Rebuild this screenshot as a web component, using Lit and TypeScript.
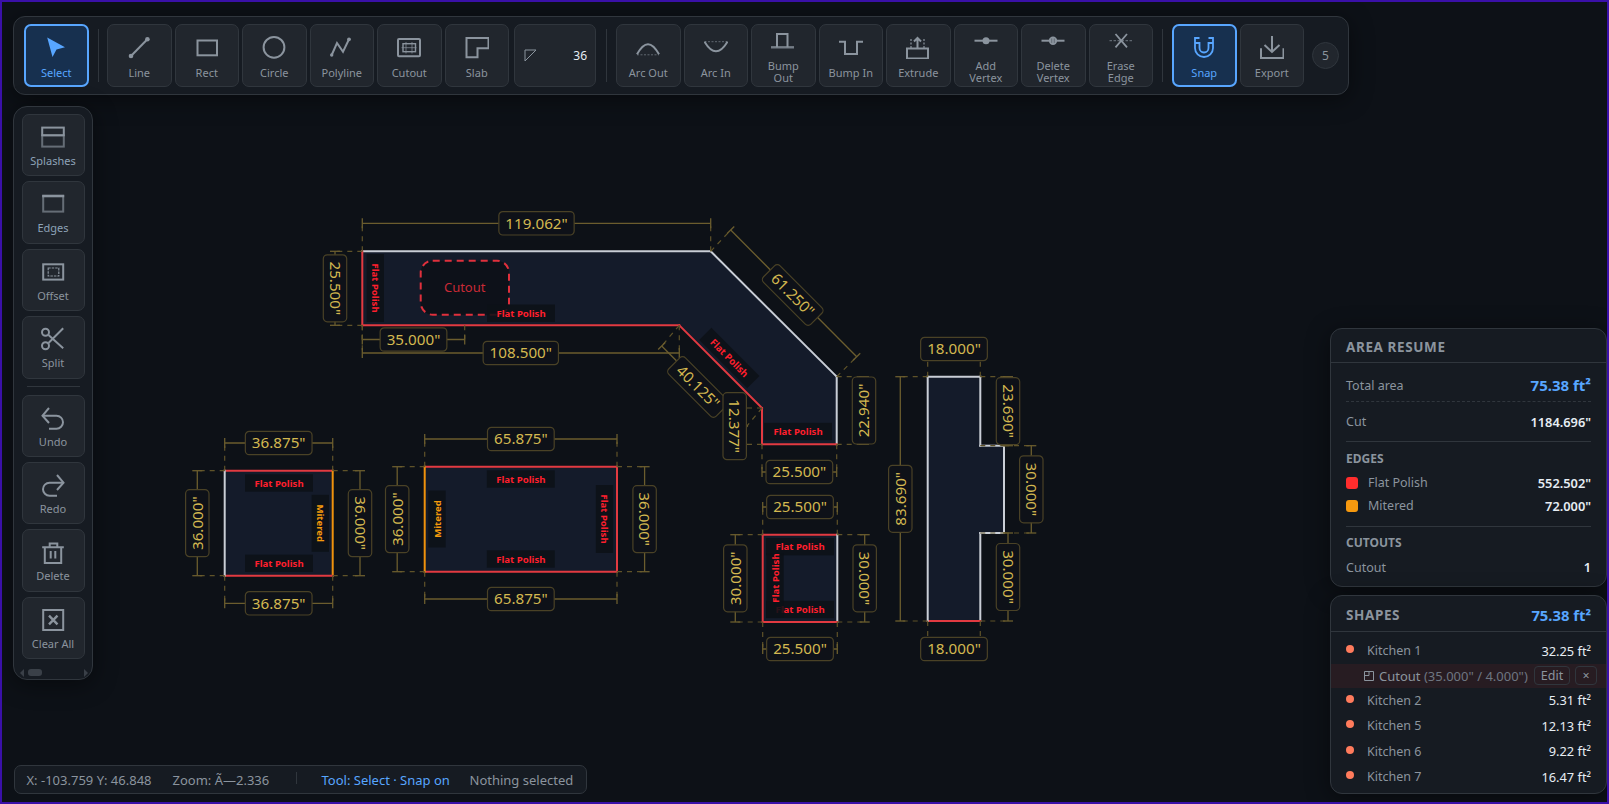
import { LitElement, css, html, svg } from 'lit'
import { customElement } from 'lit/decorators.js'

const icons: Record<string, any> = {
  select: svg`<path d="M3.2 2.5 21 12.3l-8.5 2.2L8.5 22Z" fill="currentColor" stroke="none"/>`,
  line: svg`<path d="M4 21 20.4 4.3"/><circle cx="4" cy="21" r="2.3" fill="currentColor" stroke="none"/><circle cx="20.4" cy="4.3" r="2.3" fill="currentColor" stroke="none"/>`,
  rect: svg`<rect x="2.5" y="5.5" width="19.5" height="14.8"/>`,
  circle: svg`<circle cx="12" cy="12.3" r="10.4"/>`,
  polyline: svg`<path d="M1.7 20 7 8l6 8.7 6-12.4"/><circle cx="1.7" cy="20" r="1.7" fill="currentColor" stroke="none"/><circle cx="19" cy="4.3" r="1.9" fill="currentColor" stroke="none"/>`,
  cutout: svg`<rect x="1" y="4" width="22" height="17.3" rx="1"/><rect x="6" y="8.7" width="12.5" height="8" stroke-width="1.4"/><path d="M9 7v11.500M15 7v11.500M4.500 12.700h15" stroke-width="1" opacity=".7"/>`,
  slab: svg`<path d="M1.500 3H23.500V13.300H12.500V22.300H1.500Z"/>`,
  arcOut: svg`<path d="M1 19.300Q12 -1 23 19.300"/><path d="M1 19.800H23" stroke-width="1" stroke-dasharray="2 1.500" opacity=".6"/>`,
  arcIn: svg`<path d="M.5 6.700Q12 26 23.500 6.700"/><path d="M.5 6.700H23.500" stroke-width="1" stroke-dasharray="2 1.500" opacity=".6"/>`,
  bumpOut: svg`<path d="M6 18.300V5H16.500V18.300"/><path d="M0 18.300H23" stroke-width="2.400" opacity=".8"/>`,
  bumpIn: svg`<path d="M0 6.700H6V19H18V6.700H24"/>`,
  extrude: svg`<rect x="1" y="13.500" width="21" height="10"/><path d="M11.500 13V3M8 6.500 11.500 3 15 6.500"/><path d="M5 13V3M18 13V3" stroke-width="1.200" stroke-dasharray="2 1.500"/>`,
  addVertex: svg`<path d="M.5 11.700H23.500"/><circle cx="12" cy="11.700" r="3.500" fill="currentColor" stroke="none"/>`,
  delVertex: svg`<path d="M.5 11.700H23.500"/><circle cx="12" cy="11.700" r="4.200" fill="currentColor" stroke="none"/><path d="M10.700 9.500v4.400M13.300 9.500v4.400" stroke="#5a626b" stroke-width=".8"/>`,
  eraseEdge: svg`<path d="M.5 11.700H23.500" stroke-width="1.200" stroke-dasharray="2.500 1.500" opacity=".6"/><path d="M6.500 5 18 18.300M18 5 6.500 18.300" stroke-width="1.800"/>`,
  snap: svg`<g stroke-width="1.800"><path d="M7.500 3H3V13a9 9 0 0 0 18 0V3H16.500"/><path d="M3 8H7.500V13a4.500 4.500 0 0 0 9 0V8H21"/></g>`,
  exportIcon: svg`<path d="M1 13.300V23H23.500V13.300"/><path d="M12 1V16.700M4.500 10 12 17 19.500 10"/>`,
  splashes: svg`<rect x="1.200" y="10.300" width="21.600" height="11.300" opacity=".65"/><rect x="1.200" y="2.600" width="21.600" height="7.700"/>`,
  edges: svg`<rect x="2.200" y="4" width="20" height="15.600" opacity=".65"/><path d="M1.200 4H23.200" stroke-width="2.600"/>`,
  offset: svg`<rect x="2.200" y="4.300" width="20" height="15.300"/><rect x="7.200" y="8" width="10.600" height="8" stroke-width="1.200" stroke-dasharray="2.500 1"/>`,
  split: svg`<circle cx="4.500" cy="5.300" r="3.500"/><circle cx="4.500" cy="18.700" r="3.500"/><path d="M7.500 8 22.200 21.300M7.500 16 22.200 1.300"/>`,
  undo: svg`<path d="M8 2 1.500 9.700 8 17"/><path d="M1.500 9.700H15.500a6.500 6.500 0 0 1 0 13H8"/>`,
  redo: svg`<path d="M16 2 22.500 9.700 16 17"/><path d="M22.500 9.700H8.500a6.500 6.500 0 0 0 0 13H16"/>`,
  trash: svg`<path d="M1.200 7.300H22.800M8.700 7V3.500H16.300V7M3.800 7.300V23H20.200V7.300M9.700 11V18.500M14.300 11V18.500"/>`,
  clear: svg`<rect x="2.200" y="2" width="20" height="20"/><path d="M8 7.700 16.500 16.300M16.500 7.700 8 16.300" stroke-width="2.400"/>`,
}

type Tool = { icon: string; label: string[]; on?: boolean; tint?: boolean }

const toolsA: Tool[] = [
  { icon: 'line', label: ['Line'] },
  { icon: 'rect', label: ['Rect'] },
  { icon: 'circle', label: ['Circle'] },
  { icon: 'polyline', label: ['Polyline'] },
  { icon: 'cutout', label: ['Cutout'] },
  { icon: 'slab', label: ['Slab'] },
]
const toolsB: Tool[] = [
  { icon: 'arcOut', label: ['Arc Out'] },
  { icon: 'arcIn', label: ['Arc In'] },
  { icon: 'bumpOut', label: ['Bump', 'Out'] },
  { icon: 'bumpIn', label: ['Bump In'] },
  { icon: 'extrude', label: ['Extrude'] },
  { icon: 'addVertex', label: ['Add', 'Vertex'] },
  { icon: 'delVertex', label: ['Delete', 'Vertex'] },
  { icon: 'eraseEdge', label: ['Erase', 'Edge'] },
]
const sideA: Tool[] = [
  { icon: 'splashes', label: ['Splashes'], tint: true },
  { icon: 'edges', label: ['Edges'], tint: true },
  { icon: 'offset', label: ['Offset'] },
  { icon: 'split', label: ['Split'] },
]
const sideB: Tool[] = [
  { icon: 'undo', label: ['Undo'] },
  { icon: 'redo', label: ['Redo'] },
  { icon: 'trash', label: ['Delete'] },
  { icon: 'clear', label: ['Clear All'] },
]

const RED = '#e23a41'
const WHITE = '#c9ced6'
const ORANGE = '#f0920c'

// shape outlines and their edge colours
const shapes: { pts: number[][]; edges: string[] }[] = [
  {
    pts: [[362.3, 251.3], [710.7, 251.3], [836.7, 376.7], [836.7, 444.3], [762, 444.3], [762, 408], [679.3, 325.3], [362.3, 325.3]],
    edges: [WHITE, WHITE, WHITE, RED, RED, RED, RED, RED],
  },
  {
    pts: [[224.7, 470.7], [332.7, 470.7], [332.7, 575.7], [224.7, 575.7]],
    edges: [RED, ORANGE, RED, WHITE],
  },
  {
    pts: [[424.7, 466.7], [617, 466.7], [617, 571.7], [424.7, 571.7]],
    edges: [RED, RED, RED, ORANGE],
  },
  {
    pts: [[762.7, 534.7], [837.3, 534.7], [837.3, 622], [762.7, 622]],
    edges: [RED, WHITE, RED, RED],
  },
  {
    pts: [[927.7, 376.7], [980.3, 376.7], [980.3, 445.7], [1004, 445.7], [1004, 533], [980.3, 533], [980.3, 621], [927.7, 621]],
    edges: [WHITE, WHITE, WHITE, WHITE, WHITE, WHITE, RED, WHITE],
  },
]

// a, b = measured points; qa, qb = ends of the dimension line; c = label centre
type Dim = { a: number[]; b: number[]; qa: number[]; qb: number[]; c: number[]; rot: number; w: number; t: string }

const h = (x1: number, x2: number, y: number, qy: number, t: string, w = 66.7): Dim => ({
  a: [x1, y], b: [x2, y], qa: [x1, qy], qb: [x2, qy], c: [(x1 + x2) / 2, qy], rot: 0, w, t,
})
const v = (x: number, y1: number, y2: number, qx: number, rot: number, t: string, w = 67): Dim => ({
  a: [x, y1], b: [x, y2], qa: [qx, y1], qb: [qx, y2], c: [qx, (y1 + y2) / 2], rot, w, t,
})

const dims: Dim[] = [
  h(362.3, 710.7, 251.3, 223.3, '119.062"', 75.3),
  v(362.3, 251.3, 325.3, 335, 90, '25.500"'),
  h(362.3, 464.7, 325.3, 339.5, '35.000"'),
  h(362.3, 679.3, 325.3, 353, '108.500"', 75.3),
  { a: [710.7, 251.3], b: [836.7, 376.7], qa: [730.7, 230], qb: [856.7, 356.7], c: [792.7, 295], rot: 45, w: 67, t: '61.250"' },
  { a: [679.3, 325.3], b: [762, 408], qa: [661.7, 346], qb: [744.4, 429], c: [698, 387], rot: 45, w: 67, t: '40.125"' },
  v(762, 408, 444.3, 734.7, 90, '12.377"'),
  v(836.7, 376.7, 444.3, 864, -90, '22.940"'),
  h(762, 836.7, 444.3, 472, '25.500"'),
  h(762.7, 837.3, 534.7, 507, '25.500"'),
  h(762.7, 837.3, 622, 649, '25.500"'),
  v(762.7, 534.7, 622, 735.3, -90, '30.000"'),
  v(837.3, 534.7, 622, 864.7, 90, '30.000"'),
  h(927.7, 980.3, 376.7, 349, '18.000"'),
  h(927.7, 980.3, 621, 649, '18.000"'),
  v(927.7, 376.7, 621, 900.3, -90, '83.690"'),
  v(980.3, 376.7, 445.7, 1008, 90, '23.690"'),
  v(1004, 445.7, 533, 1031.3, 90, '30.000"'),
  v(980.3, 533, 621, 1008, 90, '30.000"'),
  h(224.7, 332.7, 470.7, 443, '36.875"'),
  h(224.7, 332.7, 575.7, 603.3, '36.875"'),
  v(224.7, 470.7, 575.7, 197.3, -90, '36.000"'),
  v(332.7, 470.7, 575.7, 360, 90, '36.000"'),
  h(424.7, 617, 466.7, 439, '65.875"'),
  h(424.7, 617, 571.7, 599, '65.875"'),
  v(424.7, 466.7, 571.7, 397.2, -90, '36.000"'),
  v(617, 466.7, 571.7, 644.6, 90, '36.000"'),
]

const FP = 'Flat Polish'
// dx shifts the dark plate along the text direction (only the small Kitchen 6 one is off centre)
const labels: { x: number; y: number; rot: number; t: string; w: number; c: string; dx?: number }[] = [
  { x: 375.3, y: 288, rot: 90, t: FP, w: 68, c: '#ff1f2d' },
  { x: 521, y: 313.2, rot: 0, t: FP, w: 68, c: '#ff1f2d' },
  { x: 729.3, y: 358, rot: 45, t: FP, w: 68, c: '#ff1f2d' },
  { x: 798, y: 431.5, rot: 0, t: FP, w: 68, c: '#ff1f2d' },
  { x: 279, y: 483, rot: 0, t: FP, w: 68, c: '#ff1f2d' },
  { x: 279, y: 563.3, rot: 0, t: FP, w: 68, c: '#ff1f2d' },
  { x: 320.3, y: 523.3, rot: 90, t: 'Mitered', w: 57, c: '#f59a0c' },
  { x: 520.8, y: 479, rot: 0, t: FP, w: 68, c: '#ff1f2d' },
  { x: 520.8, y: 559, rot: 0, t: FP, w: 68, c: '#ff1f2d' },
  { x: 437, y: 519, rot: -90, t: 'Mitered', w: 57, c: '#f59a0c' },
  { x: 604.5, y: 519, rot: 90, t: FP, w: 68, c: '#ff1f2d' },
  { x: 800, y: 546.7, rot: 0, t: FP, w: 68, c: '#ff1f2d' },
  { x: 800, y: 609.5, rot: 0, t: FP, w: 68, c: '#ff1f2d' },
  { x: 775, y: 578, rot: -90, t: FP, w: 65, c: '#ff1f2d', dx: -7.5 },
]

const shapeRows = [
  { name: 'Kitchen 1', area: '32.25' },
  { name: 'Kitchen 2', area: '5.31' },
  { name: 'Kitchen 5', area: '12.13' },
  { name: 'Kitchen 6', area: '9.22' },
  { name: 'Kitchen 7', area: '16.47' },
]

@customElement('app-root')
export class AppRoot extends LitElement {
  renderBtn(t: Tool) {
    return html`
      <button class="tool ${t.on ? 'on' : ''} ${t.tint ? 'tint' : ''} ${t.label.length > 1 ? 'two' : ''}">
        <svg class="ico" viewBox="0 0 24 24">${icons[t.icon]}</svg>
        <span class="lbl">${t.label.map((l) => html`<span>${l}</span>`)}</span>
      </button>
    `
  }

  renderDim(d: Dim) {
    const dx = d.qb[0] - d.qa[0]
    const dy = d.qb[1] - d.qa[1]
    const len = Math.hypot(dx, dy)
    const tx = (-dy / len) * 5
    const ty = (dx / len) * 5
    return svg`
      <line class="ext" x1=${d.a[0]} y1=${d.a[1]} x2=${d.qa[0]} y2=${d.qa[1]} />
      <line class="ext" x1=${d.b[0]} y1=${d.b[1]} x2=${d.qb[0]} y2=${d.qb[1]} />
      <line class="dim" x1=${d.qa[0]} y1=${d.qa[1]} x2=${d.qb[0]} y2=${d.qb[1]} />
      <line class="dim" x1=${d.qa[0] - tx} y1=${d.qa[1] - ty} x2=${d.qa[0] + tx} y2=${d.qa[1] + ty} />
      <line class="dim" x1=${d.qb[0] - tx} y1=${d.qb[1] - ty} x2=${d.qb[0] + tx} y2=${d.qb[1] + ty} />
      <g transform="translate(${d.c[0]} ${d.c[1]}) rotate(${d.rot})">
        <rect class="dimbox" x=${-d.w / 2} y="-11.7" width=${d.w} height="23.400" rx="4" />
        <text class="dimtxt" y="5.300" text-anchor="middle">${d.t}</text>
      </g>
    `
  }

  renderCanvas() {
    return html`
      <svg class="canvas" viewBox="0 0 1609 804">
        ${shapes.map((s) => svg`<polygon class="fill" points=${s.pts.map((p) => p.join(',')).join(' ')} />`)}
        <rect class="hole" x="420.700" y="260.700" width="88.300" height="54" rx="12" />
        <text class="holetxt" x="464.700" y="292" text-anchor="middle">Cutout</text>
        ${shapes.map((s) =>
          s.pts.map((p, i) => {
            const n = s.pts[(i + 1) % s.pts.length]
            return svg`<line x1=${p[0]} y1=${p[1]} x2=${n[0]} y2=${n[1]} stroke=${s.edges[i]} stroke-width="2" stroke-linecap="square" />`
          }),
        )}
        ${labels.map(
          (l) => svg`
            <g transform="translate(${l.x} ${l.y}) rotate(${l.rot})">
              <rect class="lblbg" x=${-l.w / 2 + (l.dx ?? 0)} y="-8.700" width=${l.w} height="17.400" />
              <text class="lbltxt" y="3.500" text-anchor="middle" fill=${l.c}>${l.t}</text>
            </g>
          `,
        )}
        ${dims.map((d) => this.renderDim(d))}
      </svg>
    `
  }

  render() {
    return html`
      ${this.renderCanvas()}

      <div class="toolbar">
        ${this.renderBtn({ icon: 'select', label: ['Select'], on: true })}
        <div class="sep first"></div>
        ${toolsA.map((t) => this.renderBtn(t))}
        <div class="angle">
          <svg width="13" height="13" viewBox="0 0 13 13"><path d="M1 1H12L1 12Z" fill="none" stroke="#8b949e" /></svg>
          <span>36</span>
        </div>
        <div class="sep"></div>
        ${toolsB.map((t) => this.renderBtn(t))}
        <div class="sep"></div>
        ${this.renderBtn({ icon: 'snap', label: ['Snap'], on: true })}
        ${this.renderBtn({ icon: 'exportIcon', label: ['Export'] })}
        <div class="count">5</div>
      </div>

      <div class="side">
        ${sideA.map((t) => this.renderBtn(t))}
        <div class="hsep"></div>
        ${sideB.map((t) => this.renderBtn(t))}
        <div class="scroll"><i class="al"></i><b></b><i class="ar"></i></div>
      </div>

      <div class="status">
        <span class="coords">X: -103.759 Y: 46.848</span>
        <span class="zoom">Zoom: Ã—2.336</span>
        <span class="vsep"></span>
        <span class="mode">Tool: Select · Snap on</span>
        <span class="sel">Nothing selected</span>
      </div>

      <div class="right">
        <section class="panel area">
          <header class="head"><span class="title">AREA RESUME</span></header>
          <div class="body">
            <div class="row total"><span>Total area</span><b class="blue">75.38 ft²</b></div>
            <div class="row cut"><span>Cut</span><b>1184.696"</b></div>
            <div class="sub">EDGES</div>
            <div class="row item"><span class="key"><i class="sw red"></i>Flat Polish</span><b>552.502"</b></div>
            <div class="row item"><span class="key"><i class="sw org"></i>Mitered</span><b>72.000"</b></div>
            <div class="sub line">CUTOUTS</div>
            <div class="row item"><span>Cutout</span><b>1</b></div>
          </div>
        </section>
        <section class="panel shapes">
          <header class="head"><span class="title">SHAPES</span><b class="blue">75.38 ft²</b></header>
          <div class="list">
            ${shapeRows.map(
              (r, i) => html`
                <div class="srow"><span class="key"><i class="dot"></i>${r.name}</span><span class="val">${r.area} ft²</span></div>
                ${i === 0
                  ? html`<div class="cutrow">
                      <svg width="10" height="10" viewBox="0 0 10 10"><path d="M.5.5h9v9h-9zM.5 4.500h4.500v-4" fill="none" stroke="#8b949e" /></svg>
                      <span class="cname">Cutout <em>(35.000" / 4.000")</em></span>
                      <span class="mini edit">Edit</span>
                      <span class="mini x">×</span>
                    </div>`
                  : ''}
              `,
            )}
          </div>
        </section>
      </div>

      <div class="frame"></div>
    `
  }

  static styles = css`
    :host {
      display: block;
      position: relative;
      height: 100vh;
      overflow: hidden;
      background: #0d1117;
      font-family: 'Noto Sans', sans-serif;
      color: #8b949e;
    }
    .frame {
      position: absolute;
      inset: 0;
      border: 2px solid #3a10a8;
      pointer-events: none;
    }
    .canvas {
      position: absolute;
      inset: 0;
      width: 1609px;
      height: 804px;
    }
    .fill { fill: #141b2a; }
    .hole {
      fill: #0d1119;
      stroke: #e0303c;
      stroke-width: 2;
      stroke-dasharray: 7 5;
    }
    .holetxt { fill: #c92a36; font-size: 13px; }
    .lblbg { fill: #0d1117; fill-opacity: 0.88; }
    .lbltxt { font-size: 9.600px; font-weight: 700; }
    .ext {
      stroke: #5f5329;
      stroke-width: 1.200;
      stroke-dasharray: 5 5;
    }
    .dim { stroke: #6b5d2e; stroke-width: 1.300; }
    .dimbox { fill: #0e1118; stroke: #4a4226; stroke-width: 1.200; }
    .dimtxt { fill: #d3b850; font-size: 15.200px; }

    .toolbar {
      position: absolute;
      left: 13px;
      top: 16px;
      display: flex;
      align-items: stretch;
      gap: 3px;
      padding: 7px 9px 7px 10px;
      background: #161b22;
      border: 1px solid #30363d;
      border-radius: 12px;
      box-shadow: 0 4px 24px rgba(0, 0, 0, 0.45);
    }
    .tool {
      box-sizing: border-box;
      width: 64.5px;
      height: 63px;
      flex: none;
      display: flex;
      flex-direction: column;
      align-items: center;
      justify-content: center;
      gap: 7.500px;
      padding: 3.500px 0 0;
      background: #21262d;
      border: 1px solid #30363d;
      border-radius: 7px;
      color: #8b949e;
      font-family: inherit;
    }
    .tool.two { gap: 6.500px; padding-top: 3px; }
    .tool.on {
      background: #17304f;
      border: 2px solid #58a6ff;
      color: #58a6ff;
    }
    .ico {
      width: 24px;
      height: 24px;
      flex: none;
      fill: none;
      stroke: currentColor;
      stroke-width: 2;
    }
    .lbl {
      display: flex;
      flex-direction: column;
      align-items: center;
      font-size: 11px;
      line-height: 12.3px;
      white-space: nowrap;
    }
    .tint .lbl { color: #8ea3b8; }
    .sep {
      width: 1px;
      margin: 5px 6px;
      background: #30363d;
      flex: none;
    }
    .sep.first { margin-right: 5.500px; }
    .angle {
      box-sizing: border-box;
      width: 82px;
      margin: 0 1px 0 2px;
      display: flex;
      align-items: center;
      justify-content: space-between;
      padding: 0 8px 0 9px;
      background: #21262d;
      border: 1px solid #30363d;
      border-radius: 7px;
      color: #e6edf3;
      font-size: 12px;
    }
    .count {
      box-sizing: border-box;
      width: 27px;
      height: 27px;
      margin: auto 0 auto 5px;
      display: flex;
      align-items: center;
      justify-content: center;
      border-radius: 50%;
      background: #21262d;
      border: 1px solid #30363d;
      font-size: 12px;
    }

    .side {
      box-sizing: border-box;
      position: absolute;
      left: 13px;
      top: 106px;
      width: 80px;
      height: 574px;
      display: flex;
      flex-direction: column;
      align-items: center;
      gap: 5px;
      padding-top: 7px;
      background: #161b22;
      border: 1px solid #30363d;
      border-radius: 14px;
      box-shadow: 0 4px 24px rgba(0, 0, 0, 0.45);
    }
    .side .tool {
      width: 63px;
      height: 62.400px;
      flex: none;
      gap: 6px;
      padding-top: 2px;
    }
    .hsep {
      width: 53px;
      height: 1px;
      flex: none;
      margin: 2.500px 0;
      background: #30363d;
    }
    .scroll {
      align-self: stretch;
      display: flex;
      align-items: center;
      gap: 4px;
      margin-top: 5px;
      padding: 0 4px 0 6px;
      height: 7px;
    }
    .scroll b {
      width: 14px;
      height: 7px;
      border-radius: 3px;
      background: #3a4048;
      margin-right: auto;
    }
    .scroll i { width: 0; height: 0; border: 4px solid transparent; }
    .scroll .al { border-right-color: #3a4048; border-left-width: 0; }
    .scroll .ar { border-left-color: #3a4048; border-right-width: 0; }

    .status {
      box-sizing: border-box;
      position: absolute;
      left: 13.500px;
      top: 765px;
      width: 573px;
      height: 29px;
      display: flex;
      align-items: center;
      padding-left: 12px;
      background: #161b22;
      border: 1px solid #30363d;
      border-radius: 7px;
      font-size: 13px;
      white-space: nowrap;
    }
    .coords { width: 146px; flex: none; }
    .zoom { width: 123px; flex: none; }
    .vsep {
      width: 1px;
      height: 12px;
      margin: -3px 25px 0 0;
      background: #30363d;
      flex: none;
    }
    .mode { width: 148px; flex: none; color: #58a6ff; }

    .right {
      position: absolute;
      left: 1330px;
      top: 328px;
      width: 277px;
      display: flex;
      flex-direction: column;
      gap: 8px;
    }
    .panel {
      box-sizing: border-box;
      background: #161b22;
      border: 1px solid #30363d;
      border-radius: 12px;
      box-shadow: 0 4px 24px rgba(0, 0, 0, 0.45);
    }
    .area { height: 259px; }
    .shapes { height: 199px; }
    .head {
      box-sizing: border-box;
      height: 34px;
      display: flex;
      align-items: center;
      justify-content: space-between;
      padding: 3px 15px 0;
      border-bottom: 1px solid #30363d;
    }
    .shapes .head { height: 36px; padding-top: 2px; }
    .title {
      font-size: 13.500px;
      font-weight: 700;
      letter-spacing: 0.6px;
      color: #8b949e;
    }
    .blue { color: #58a6ff; font-size: 14.800px; font-weight: 700; }
    .body { padding: 0 15px; }
    .row {
      display: flex;
      align-items: center;
      justify-content: space-between;
      font-size: 12.500px;
    }
    .row b { color: #e6edf3; font-size: 12.800px; font-weight: 600; }
    .row b.blue { color: #58a6ff; font-size: 15px; font-weight: 700; }
    .total {
      height: 22px;
      padding: 11px 0 5px;
      border-bottom: 1px dashed #30363d;
    }
    .cut { height: 39px; border-bottom: 1px solid #30363d; }
    .sub {
      height: 16px;
      margin-top: 8.500px;
      font-size: 12px;
      line-height: 16px;
      font-weight: 700;
      color: #8b949e;
    }
    .sub.line {
      margin-top: 8.500px;
      padding-top: 8.500px;
      border-top: 1px solid #30363d;
    }
    .item { height: 23px; }
    .sub + .item { margin-top: 4.500px; }
    .key { display: flex; align-items: center; }
    .sw {
      width: 12px;
      height: 12px;
      margin-right: 10px;
      border-radius: 3px;
    }
    .sw.red { background: #ff2d2d; }
    .sw.org { background: #f6990f; }
    .list { padding-top: 6px; }
    .srow {
      height: 25.500px;
      display: flex;
      align-items: center;
      justify-content: space-between;
      padding: 0 15px;
      font-size: 12.500px;
    }
    .dot {
      width: 8px;
      height: 8px;
      margin: -3px 13px 0 0;
      border-radius: 50%;
      background: #ff7b5c;
    }
    .val { color: #e6edf3; font-size: 12.800px; }
    .cutrow {
      height: 24px;
      display: flex;
      align-items: center;
      padding-left: 33px;
      background: #271c22;
      font-size: 13px;
      white-space: nowrap;
    }
    .cname { margin-left: 5px; width: 155px; flex: none; }
    .cname em { font-style: normal; color: #6e7681; }
    .mini {
      box-sizing: border-box;
      height: 19px;
      display: flex;
      align-items: center;
      justify-content: center;
      border: 1px solid #30363d;
      border-radius: 4px;
      font-size: 12.500px;
    }
    .edit { width: 36px; }
    .x { width: 22px; margin-left: 5px; }
  `
}
